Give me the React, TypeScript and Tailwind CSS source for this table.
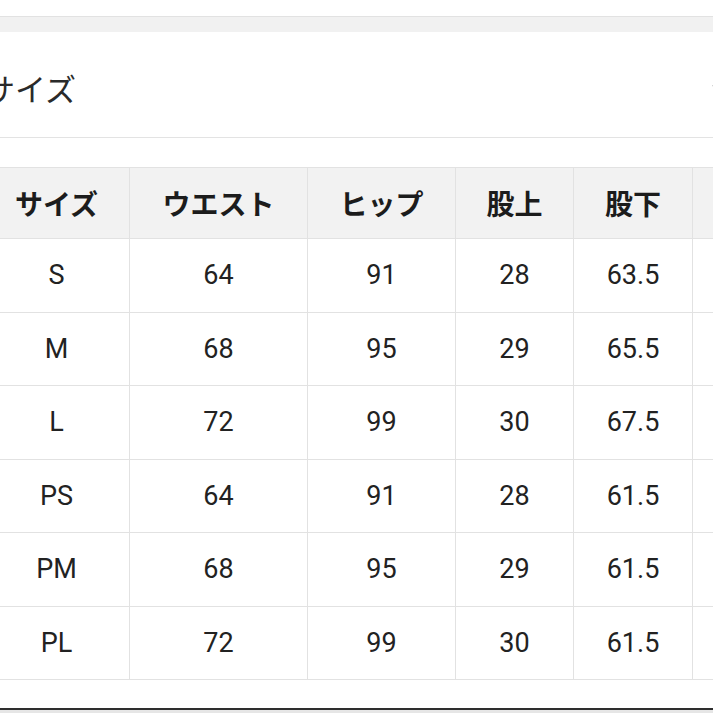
import React from 'react'

const rows: string[][] = [
  ['S', '64', '91', '28', '63.5'],
  ['M', '68', '95', '29', '65.5'],
  ['L', '72', '99', '30', '67.5'],
  ['PS', '64', '91', '28', '61.5'],
  ['PM', '68', '95', '29', '61.5'],
  ['PL', '72', '99', '30', '61.5'],
]

const headers = ['サイズ', 'ウエスト', 'ヒップ', '股上', '股下', '']

const font = { fontFamily: 'Roboto, "Noto Sans CJK JP", sans-serif' }
const jp = { fontFamily: '"Noto Sans CJK JP", sans-serif' }

export default function App() {
  return (
    <div className="w-[713px] h-[713px] overflow-hidden bg-white flex flex-col" style={font}>
      {/* top strip */}
      <div className="h-[16px] shrink-0 bg-white" />
      <div className="h-[16px] shrink-0 bg-[#f1f1f1] border-t border-[#e2e2e2]" />

      {/* title */}
      <div className="h-[106px] shrink-0 flex items-center justify-between pt-[5px] border-b border-[#e3e3e3] -ml-[16px] -mr-[12px]">
        <span className="text-[31px] leading-none text-[#2a2a2a]" style={jp}>
          サイズ
        </span>
        <svg width="16" height="16" viewBox="0 0 16 16" fill="none" stroke="#9a9a9a" strokeWidth="2">
          <polyline points="4,6 8,10 12,6" />
        </svg>
      </div>

      <div className="h-[29px] shrink-0" />

      {/* table */}
      <div className="-ml-[17px] shrink-0">
        <table className="table-fixed border-collapse w-[850px]">
          <colgroup>
            <col className="w-[146px]" />
            <col className="w-[178px]" />
            <col className="w-[148px]" />
            <col className="w-[118px]" />
            <col className="w-[119px]" />
            <col className="w-[141px]" />
          </colgroup>
          <thead>
            <tr className="h-[71px] bg-[#f2f2f2]">
              {headers.map((h, i) => (
                <th
                  key={i}
                  className="border border-[#e2e2e2] text-[28px] font-bold text-[#1c1c1c] text-center align-middle"
                  style={jp}
                >
                  {h}
                </th>
              ))}
            </tr>
          </thead>
          <tbody>
            {rows.map(r => (
              <tr key={r[0]} className="h-[73.5px]">
                {r.map((c, i) => (
                  <td key={i} className="border border-[#e2e2e2] text-[27px] text-[#222] text-center align-middle">
                    {c}
                  </td>
                ))}
                <td className="border border-[#e2e2e2]" />
              </tr>
            ))}
          </tbody>
        </table>
      </div>

      {/* bottom */}
      <div className="h-[28px] shrink-0" />
      <div className="flex-1 border-t-2 border-[#2e2e2e] bg-[#e6e6e6]" />
    </div>
  )
}
